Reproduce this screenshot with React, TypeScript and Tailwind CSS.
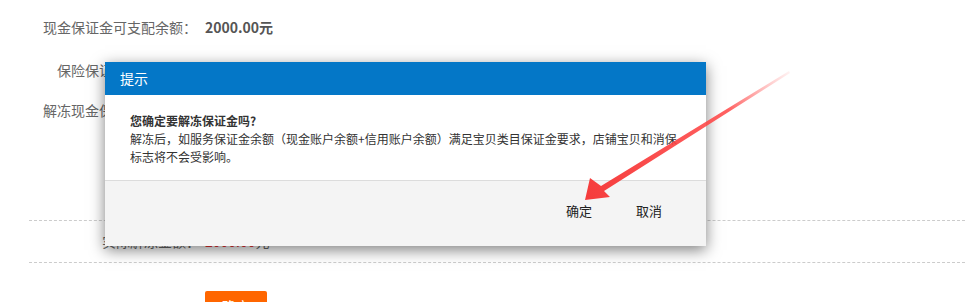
import React from "react";

const font = { fontFamily: '"Microsoft YaHei", "Noto Sans CJK SC", "Noto Sans", sans-serif' };

function Arrow() {
  return (
    <svg className="absolute left-0 top-0 pointer-events-none" width="965" height="302" viewBox="0 0 965 302">
      <defs>
        <linearGradient id="arrowFill" x1="790" y1="72" x2="585" y2="200" gradientUnits="userSpaceOnUse">
          <stop offset="0" stopColor="#ff8080" stopOpacity="0.1" />
          <stop offset="0.3" stopColor="#ff4545" stopOpacity="0.85" />
          <stop offset="1" stopColor="#f53b3b" />
        </linearGradient>
      </defs>
      <polygon
        points="585,200 590,178 601,186 789,71 790,73 604,191 610,197"
        fill="url(#arrowFill)"
      />
    </svg>
  );
}

function Dialog() {
  return (
    <div className="absolute left-[105px] top-[62px] w-[601px] bg-white shadow-[0_4px_14px_rgba(0,0,0,0.5)]">
      <div className="h-[33px] bg-[#0477c7] flex items-center px-[15px] text-[14px] text-white">提示</div>
      <div className="px-[25px] pt-[17px] pb-[14px] text-[12px] leading-[18px] text-[#333]">
        <div className="font-bold">您确定要解冻保证金吗?</div>
        <div>
          解冻后，如服务保证金余额（现金账户余额+信用账户余额）满足宝贝类目保证金要求，店铺宝贝和消保标志将不会受影响。
        </div>
      </div>
      <div className="h-[66px] bg-[#f4f4f4] border-t border-[#dcdcdc] flex items-center justify-end pr-[44px] gap-[44px] text-[13px] text-[#222] pb-[5px]">
        <span>确定</span>
        <span>取消</span>
      </div>
    </div>
  );
}

export default function App() {
  return (
    <div className="relative w-[965px] h-[302px] bg-white overflow-hidden" style={font}>
      <div className="pt-[17px] text-[14px] text-[#666]">
        <div className="pl-[43px] h-[20px] flex items-center">
          <span>现金保证金可支配余额：</span>
          <span className="ml-[8px] font-bold text-[#555]">2000.00元</span>
        </div>
        <div className="pl-[57px] h-[20px] mt-[23px] flex items-center">保险保证金可支配余额：</div>
        <div className="pl-[43px] h-[20px] mt-[20px] flex items-center">解冻现金保证金：</div>
        <div className="ml-[29px] mt-[100px] border-t border-dashed border-[#ccc]" />
        <div className="h-[41px] flex items-center">
          <span className="w-[200px] text-right">实际解冻金额：</span>
          <span className="ml-[5px] text-[#e33]">2000.00</span>
          <span>元</span>
        </div>
        <div className="ml-[29px] border-t border-dashed border-[#ccc]" />
        <div className="pl-[205px] pt-[28px]">
          <div className="w-[62px] h-[30px] bg-[#ff6600] text-white flex items-center justify-center rounded-[2px]">确定</div>
        </div>
      </div>
      <Dialog />
      <Arrow />
    </div>
  );
}
